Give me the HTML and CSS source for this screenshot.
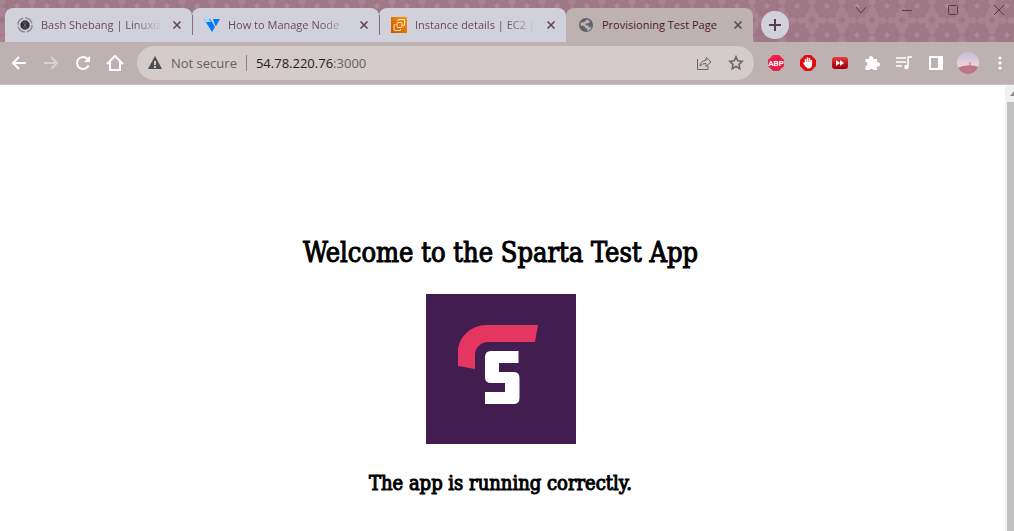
FILE: index.html
```html
<!DOCTYPE html>
<html lang="en">
<head>
<meta charset="utf-8">
<title>Provisioning Test Page</title>
<link rel="stylesheet" href="styles.css">
</head>
<body>
<header class="browser">
  <div class="strip">
    <svg class="strip-pattern" aria-hidden="true">
      <defs>
        <pattern id="damask" x="782" y="-9" width="30" height="29" patternUnits="userSpaceOnUse">
          <g fill="#9e7985">
            <path d="M15 1l3 3 5-1 1 5 3 1-1 3 4 3-4 3 1 3-3 1-1 5-5-1-3 3-3-3-5 1-1-5-3-1 1-3-4-3 4-3-1-3 3-1 1-5 5 1z"/>
            <path d="M0-4l4 4-4 4zM30-4l-4 4 4 4zM0 25l4 4-4 4zM30 25l-4 4 4 4z"/>
          </g>
          <path d="M15 12l3 3-3 3-3-3zM10 9h1v1h-1zM19 9h1v1h-1zM10 20h1v1h-1zM19 20h1v1h-1z" fill="#ac8896"/>
        </pattern>
      </defs>
      <rect width="100%" height="100%" fill="#a98391"/>
      <rect width="100%" height="100%" fill="url(#damask)"/>
    </svg>
    <nav class="tabs" aria-label="Tabs">
      <div class="tab">
        <svg class="favicon" viewBox="0 0 16 16"><circle cx="8" cy="8" r="7" fill="none" stroke="#8c8b92" stroke-width="1.5" stroke-dasharray="9 2"/><circle cx="8" cy="8" r="4.7" fill="#333138"/><path d="M5 4l6 8M11 4l-6 8M8 3v10" stroke="#77737b" stroke-width=".6"/></svg>
        <a class="tab-title" href="#">Bash Shebang | Linuxiz</a>
        <button class="close" aria-label="Close tab"><svg viewBox="0 0 8 8"><path d="M.5.5l7 7M7.500.5l-7 7"/></svg></button>
      </div>
      <div class="tab">
        <svg class="favicon" viewBox="0 0 16 16"><path d="M0 2h6l5 8-3 5z" fill="#007bfc"/><path d="M0 2h5l2 3H2z" fill="#9bd8ff"/><path d="M9 2h7l-4 7-1-1z" fill="#007bfc"/></svg>
        <a class="tab-title" href="#">How to Manage Node</a>
        <button class="close" aria-label="Close tab"><svg viewBox="0 0 8 8"><path d="M.5.5l7 7M7.500.5l-7 7"/></svg></button>
      </div>
      <div class="tab tab-last">
        <svg class="favicon" viewBox="0 0 16 16"><defs><linearGradient id="ec2" x1="0" y1="1" x2="1" y2="0"><stop stop-color="#cf5207"/><stop offset="1" stop-color="#f39a08"/></linearGradient></defs><path d="M0 0h16v16H0z" fill="url(#ec2)"/><g fill="none" stroke="#ffe5c8"><rect x="6" y="5.500" width="5" height="5" rx="1"/><path d="M7 4V3q0-.5.5-.5h5.500q.5 0 .5.5v5q0 .5-.5.5h-1M4.500 7.500h-1q-.5 0-.5.5v5q0 .5.5.5H9q.5 0 .5-.5v-1"/></g></svg>
        <a class="tab-title" href="#">Instance details | EC2 |</a>
        <button class="close" aria-label="Close tab"><svg viewBox="0 0 8 8"><path d="M.5.5l7 7M7.500.5l-7 7"/></svg></button>
      </div>
      <div class="tab tab-active">
        <svg class="favicon" viewBox="0 0 16 16"><circle cx="8" cy="8" r="7" fill="#5d646b"/><path d="M9 2.500l3 1.500-1 2-3 .5-.5 1.500 3 .5.5 2 2.500-1c-.5 2.500-2 4-4.500 4.500l.5-2-2.500-1-.5-2L2.500 8.500c0-1.500.3-2.500 1-3.500l2 .5z" fill="#bdb1b1"/></svg>
        <a class="tab-title" href="#" aria-current="page">Provisioning Test Page</a>
        <button class="close" aria-label="Close tab"><svg viewBox="0 0 8 8"><path d="M.5.5l7 7M7.500.5l-7 7"/></svg></button>
      </div>
    </nav>
    <button class="new-tab" aria-label="New tab"><svg width="12" height="12" viewBox="0 0 12 12"><path d="M6 0v12M0 6h12" stroke="#5b3a4b" stroke-width="2"/></svg></button>
    <div class="window-controls">
      <button aria-label="Search tabs"><svg width="12" height="12" viewBox="0 0 12 12"><path d="M1 3l5 6 5-6"/></svg></button>
      <button aria-label="Minimize"><svg width="12" height="12" viewBox="0 0 12 12"><path d="M1 6.500h10"/></svg></button>
      <button aria-label="Maximize"><svg width="12" height="12" viewBox="0 0 12 12"><rect x="1.500" y="1.500" width="9" height="9" rx="1"/></svg></button>
      <button aria-label="Close"><svg width="12" height="12" viewBox="0 0 12 12"><path d="M1 1l10 10M11 1L1 11"/></svg></button>
    </div>
  </div>

  <div class="toolbar">
    <div class="nav-buttons">
      <button aria-label="Back"><svg width="16" height="16" viewBox="0 0 16 16"><path d="M15 8H2M8 2L2 8l6 6"/></svg></button>
      <button aria-label="Forward" class="faded"><svg width="16" height="16" viewBox="0 0 16 16"><path d="M1 8h13M8 2l6 6-6 6"/></svg></button>
      <button aria-label="Reload"><svg width="16" height="16" viewBox="0 0 16 16"><path d="M13.500 10.500A6 6 0 1 1 12.500 4"/><path d="M15 1v6H9z" fill="#fff" stroke="none"/></svg></button>
      <button aria-label="Home"><svg width="18" height="16" viewBox="0 0 18 16"><path d="M1 9l8-8 8 8M4 7v8h10V7"/></svg></button>
    </div>
    <form class="omnibox">
      <svg width="14" height="14" viewBox="0 0 14 14"><path d="M7 0l7 13H0z" fill="#4c5055"/><path d="M6 5h2v4H6zM6 10h2v2H6z" fill="#d4cbcb"/></svg>
      <span class="security">Not secure</span>
      <span class="divider"></span>
      <div class="address" role="textbox" tabindex="0" aria-label="Address"><span class="host">54.78.220.76</span>:3000</div>
      <button type="button" aria-label="Share"><svg width="16" height="16" viewBox="0 0 16 16"><path d="M1.500 4v10.500h10.500V11M4 11c.5-4 3-5.500 6-5.500v-3l5 4.500-5 4.500v-3c-3 0-4.500 1-6 2.500z"/></svg></button>
      <button type="button" aria-label="Bookmark"><svg width="16" height="16" viewBox="0 0 16 16"><path d="M8 1.800l1.800 4 4.400.5-3.200 3 .8 4.400L8 11.500l-3.800 2.200.8-4.400-3.200-3 4.400-.5z" stroke-width="1.600"/></svg></button>
    </form>
    <div class="extensions">
      <button aria-label="Adblock Plus"><svg width="16" height="16" viewBox="0 0 16 16"><path d="M5 0h6l5 5v6l-5 5H5l-5-5V5z" fill="#ed1e45"/><text x="8" y="11" class="abp">ABP</text></svg></button>
      <button aria-label="AdBlock"><svg width="16" height="16" viewBox="0 0 16 16"><path d="M5 0h6l5 5v6l-5 5H5l-5-5V5z" fill="#e00b0d"/><path d="M5.500 9V4.500M7.500 8V3M9.500 8V3.500M11.300 9V5.500M4 8l2 3" stroke="#fff" stroke-width="1.500" stroke-linecap="round"/><path d="M5 7h7v3q0 3-3 3.500H7.500L4.500 10z" fill="#fff"/></svg></button>
      <button aria-label="Video speed"><svg width="16" height="16" viewBox="0 0 16 16"><defs><linearGradient id="red" x2="0" y2="1"><stop stop-color="#e63f42"/><stop offset=".5" stop-color="#c7151a"/><stop offset="1" stop-color="#970007"/></linearGradient></defs><rect y="2" width="16" height="12" rx="3" fill="url(#red)"/><path d="M4 5l4 3-4 3zM8 5l4 3-4 3z" fill="#fff"/></svg></button>
      <button aria-label="Extensions"><svg width="16" height="16" viewBox="0 0 16 16"><path d="M1.500 4H5a2.200 2.200 0 1 1 4 0h4v3.500a2.200 2.200 0 1 1 0 4V15H9.500a2.200 2.200 0 0 0-4 0h-4v-4a2 2 0 0 0 0-4z" fill="#fff"/></svg></button>
      <button aria-label="Media"><svg width="16" height="16" viewBox="0 0 16 16"><path d="M0 3h10M0 7h10M0 11h6M12 12V2h4" fill="none" stroke="#fff" stroke-width="1.600"/><circle cx="10.500" cy="12" r="2.300" fill="#fff"/></svg></button>
      <button aria-label="Side panel"><svg width="16" height="16" viewBox="0 0 16 16"><path d="M1 1h14v14H1zM3 3v10h7V3z" fill="#fff" fill-rule="evenodd"/></svg></button>
    </div>
    <button class="profile" aria-label="Profile"><svg width="22" height="22" viewBox="0 0 22 22"><defs><clipPath id="round"><circle cx="11" cy="11" r="11"/></clipPath><linearGradient id="sky" x2="0" y2="1"><stop stop-color="#c7bcd8"/><stop offset=".65" stop-color="#edd3d8"/></linearGradient></defs><g clip-path="url(#round)"><path d="M0 0h22v22H0z" fill="url(#sky)"/><path d="M0 16q11-5 22-1v7H0z" fill="#bb758c"/><path d="M13 10v4" stroke="#b1788e"/></g></svg></button>
    <button class="menu" aria-label="Menu"><svg width="4" height="14" viewBox="0 0 4 14"><g fill="#fff"><circle cx="2" cy="2" r="1.600"/><circle cx="2" cy="7" r="1.600"/><circle cx="2" cy="12" r="1.600"/></g></svg></button>
  </div>
</header>

<div class="viewport">
  <main class="page">
    <h1>Welcome to the Sparta Test App</h1>
    <svg class="logo" viewBox="0 0 150 150" role="img" aria-label="Sparta logo"><path d="M0 0h150v150H0z" fill="#411e4f"/><path d="M112 31H61C44 31 32 44 32 58v14l17 3V61c0-7 6-13 13-13h47z" fill="#e43660"/><path d="M92.500 57v12H73v9h15q5.500 0 5.500 6v20q0 6-6 6H59V98h20V89H65q-6 0-6-6V63q0-6 6-6z" fill="#fff"/></svg>
    <h2>The app is running correctly.</h2>
  </main>
  <div class="scrollbar" aria-hidden="true">
    <svg width="9" height="17" viewBox="0 0 9 17"><path d="M5 11l4-5v5z" fill="#8b8b8b"/></svg>
    <div class="thumb"></div>
  </div>
</div>
</body>
</html>
```
FILE: styles.css
```css
* { box-sizing: border-box; }

body {
  margin: 0;
  min-height: 100vh;
  display: flex;
  flex-direction: column;
  background: #fff;
  font-family: "Open Sans", sans-serif;
}

button {
  display: grid;
  place-items: center;
  padding: 0;
  border: 0;
  background: none;
}

.strip {
  position: relative;
  display: flex;
  height: 42px;
  padding: 0 0 0 5px;
  background: #a98391;
}

.strip-pattern {
  position: absolute;
  inset: 0;
  width: 100%;
  height: 100%;
}

.tabs {
  position: relative;
  display: flex;
  flex: 0 1 748px;
  min-width: 0;
  padding-top: 8px;
}

.tab {
  display: flex;
  flex: 1 1 0;
  align-items: center;
  min-width: 0;
  padding: 0 10px 0 12px;
  border-radius: 8px 8px 0 0;
  background: #d1d1dc;
  color: #6b4a5d;
}

.tab + .tab::before {
  content: "";
  width: 1px;
  height: 20px;
  margin-left: -12px;
  margin-right: 11px;
  background: #886c7b;
}

.tab-last { border-radius: 8px 8px 0 0; }
.tab.tab-active { background: #bdb1b1; color: #4a202f; }
.tab.tab-active::before { background: transparent; }

.favicon { flex: none; width: 16px; height: 16px; }

.tab-title {
  flex: 1;
  min-width: 0;
  margin: 0 8px;
  overflow: hidden;
  color: inherit;
  font-size: 11px;
  line-height: 18px;
  text-decoration: none;
  white-space: nowrap;
  mask-image: linear-gradient(to right, #000 75%, transparent);
}

.tab-active .tab-title { mask-image: none; }

.close { width: 11px; height: 16px; color: #5f4052; }
.close svg { width: 8px; height: 8px; }
.close path { stroke: currentColor; stroke-width: 1.5; }

.new-tab {
  position: relative;
  width: 28px;
  height: 28px;
  margin: 11px 0 0 8px;
  border-radius: 50%;
  background: #d1d1dc;
}

.window-controls {
  position: relative;
  display: flex;
  gap: 34px;
  height: 20px;
  margin-left: auto;
  padding-right: 9px;
}

.window-controls path,
.window-controls rect { fill: none; stroke: #5a3d49; }

.toolbar {
  display: flex;
  align-items: center;
  height: 43px;
  padding-right: 12px;
  border-bottom: 1px solid #cbbfc0;
  background: #bdb1b1;
}

.nav-buttons { display: flex; gap: 8px; padding: 0 10px 0 7px; }
.nav-buttons button { width: 24px; height: 24px; }
.nav-buttons path { fill: none; stroke: #fff; stroke-width: 2; }
.nav-buttons path[fill] { fill: #fff; stroke: none; }
.nav-buttons .faded { opacity: .4; }

.omnibox {
  display: flex;
  flex: 1;
  align-items: center;
  min-width: 0;
  height: 34px;
  margin: 0;
  padding: 0 10px 0 11px;
  border-radius: 17px;
  background: #d4cbcb;
  color: #5f6368;
  font-size: 13px;
  line-height: 20px;
}

.omnibox button { width: 16px; height: 16px; margin-left: 16px; }
.omnibox button path { fill: none; stroke: #64686c; }
.security { margin-left: 9px; white-space: nowrap; }
.divider { width: 1px; height: 16px; margin: 0 9px; background: #85868a; }
.address { flex: 1; min-width: 0; overflow: hidden; outline: 0; }
.host { color: #202124; }

.extensions { display: flex; gap: 16px; padding: 0 13px 0 14px; }
.abp { fill: #fff; font-family: Roboto, sans-serif; font-size: 8px; font-weight: 700; text-anchor: middle; }
.profile { margin-right: 19px; }

.viewport {
  display: flex;
  flex: 1;
}

.page {
  display: flex;
  flex: 1;
  flex-direction: column;
  align-items: center;
  padding: 148px 4px 0 0;
  color: #000;
  font-family: "DejaVu Serif Condensed", "DejaVu Serif", serif;
  -webkit-text-stroke: 1px #000;
}

h1 {
  margin: 0;
  font-size: 27px;
  font-weight: 400;
  line-height: 40px;
}

.logo { width: 150px; height: 150px; margin: 21px 0 24px; }

h2 {
  margin: 0;
  font-size: 20px;
  font-weight: 400;
  line-height: 30px;
}

.scrollbar { display: flex; flex-direction: column; width: 9px; background: #f1f1f1; }
.thumb { flex: 1; margin-left: 2px; background: #c1c1c1; }
```
